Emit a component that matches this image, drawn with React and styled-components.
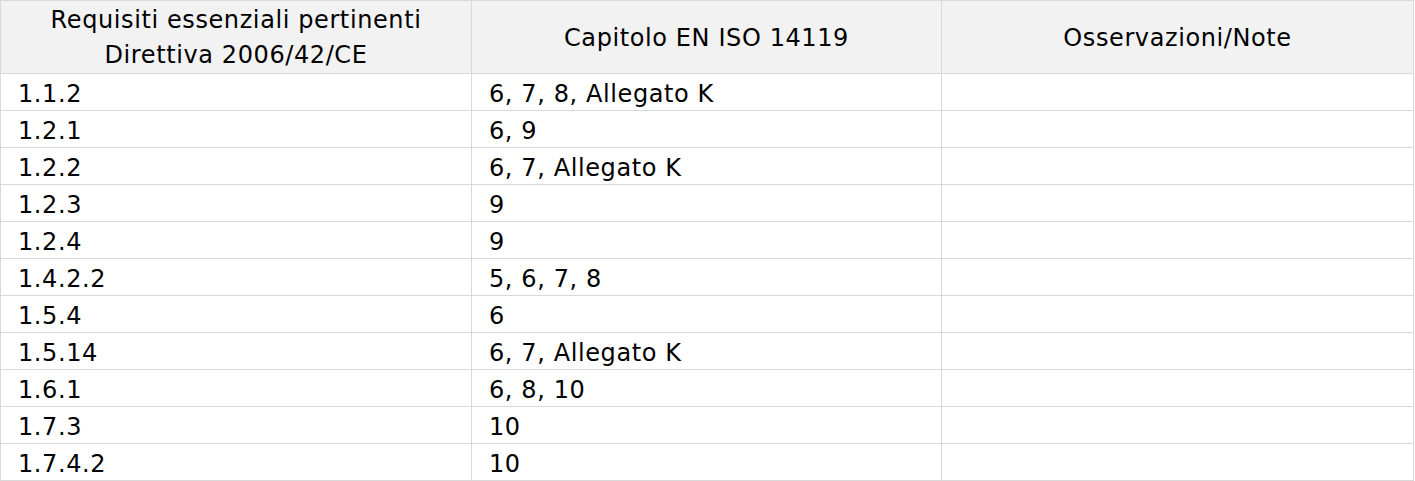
import React from "react";
import styled, { createGlobalStyle } from "styled-components";

const Global = createGlobalStyle`
  html, body { margin: 0; padding: 0; background: #ffffff; }
  body { font-family: "DejaVu Sans", sans-serif; }
`;

const Table = styled.table`
  border-collapse: collapse;
  width: 1413px;
  table-layout: fixed;
  font-family: "DejaVu Sans", sans-serif;
  font-size: 24px;
  letter-spacing: 0.6px;
  color: #000;
`;

const HeadCell = styled.th`
  background: #f2f2f2;
  border: 1px solid #d9d9d9;
  font-weight: normal;
  text-align: center;
  vertical-align: middle;
  height: 70px;
  padding: 2px 8px 0;
  line-height: 35px;
`;

const Cell = styled.td`
  border: 1px solid #d9d9d9;
  height: 37px;
  padding: 4px 0 0 17px;
  line-height: 32px;
  vertical-align: middle;
  box-sizing: border-box;
`;

const rows = [
  ["1.1.2", "6, 7, 8, Allegato K"],
  ["1.2.1", "6, 9"],
  ["1.2.2", "6, 7, Allegato K"],
  ["1.2.3", "9"],
  ["1.2.4", "9"],
  ["1.4.2.2", "5, 6, 7, 8"],
  ["1.5.4", "6"],
  ["1.5.14", "6, 7, Allegato K"],
  ["1.6.1", "6, 8, 10"],
  ["1.7.3", "10"],
  ["1.7.4.2", "10"],
];

export default function App() {
  return (
    <>
      <Global />
      <Table>
        <colgroup>
          <col style={{ width: 471 }} />
          <col style={{ width: 470 }} />
          <col style={{ width: 472 }} />
        </colgroup>
        <thead>
          <tr>
            <HeadCell>
              Requisiti essenziali pertinenti
              <br />
              Direttiva 2006/42/CE
            </HeadCell>
            <HeadCell>Capitolo EN ISO 14119</HeadCell>
            <HeadCell>Osservazioni/Note</HeadCell>
          </tr>
        </thead>
        <tbody>
          {rows.map(([a, b]) => (
            <tr key={a}>
              <Cell>{a}</Cell>
              <Cell>{b}</Cell>
              <Cell />
            </tr>
          ))}
        </tbody>
      </Table>
    </>
  );
}
